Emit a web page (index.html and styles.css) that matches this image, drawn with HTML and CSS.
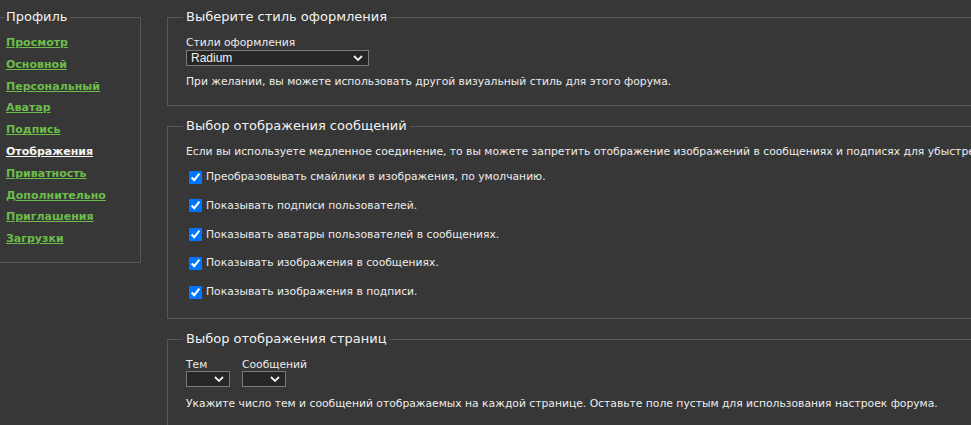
FILE: index.html
```html
<!DOCTYPE html>
<html lang="ru">
<head>
<meta charset="utf-8">
<title>Профиль — Отображения</title>
<link rel="stylesheet" href="styles.css">
</head>
<body>
<div class="page">
  <aside class="side">
    <fieldset class="nav-box">
      <legend class="nav-title">Профиль</legend>
      <nav class="nav">
        <a href="#" class="nav-link">Просмотр</a>
        <a href="#" class="nav-link">Основной</a>
        <a href="#" class="nav-link">Персональный</a>
        <a href="#" class="nav-link">Аватар</a>
        <a href="#" class="nav-link">Подпись</a>
        <a href="#" class="nav-link is-active">Отображения</a>
        <a href="#" class="nav-link">Приватность</a>
        <a href="#" class="nav-link">Дополнительно</a>
        <a href="#" class="nav-link">Приглашения</a>
        <a href="#" class="nav-link">Загрузки</a>
      </nav>
    </fieldset>
  </aside>
  <main class="main">
    <fieldset class="box box-style">
      <legend class="box-title">Выберите стиль оформления</legend>
      <div class="field-label">Стили оформления</div>
      <div class="select select-wide"><span class="select-value">Radium</span><svg class="chev" viewBox="0 0 10 6" width="10" height="6"><path d="M1 1l4 4 4-4" fill="none" stroke="#f0f0f0" stroke-width="1.8"/></svg></div>
      <p class="help">При желании, вы можете использовать другой визуальный стиль для этого форума.</p>
    </fieldset>

    <fieldset class="box box-msg">
      <legend class="box-title">Выбор отображения сообщений</legend>
      <p class="intro">Если вы используете медленное соединение, то вы можете запретить отображение изображений в сообщениях и подписях для убыстрения загрузки страниц.</p>
      <label class="check"><input type="checkbox" checked> Преобразовывать смайлики в изображения, по умолчанию.</label>
      <label class="check"><input type="checkbox" checked> Показывать подписи пользователей.</label>
      <label class="check"><input type="checkbox" checked> Показывать аватары пользователей в сообщениях.</label>
      <label class="check"><input type="checkbox" checked> Показывать изображения в сообщениях.</label>
      <label class="check"><input type="checkbox" checked> Показывать изображения в подписи.</label>
    </fieldset>

    <fieldset class="box box-pages">
      <legend class="box-title">Выбор отображения страниц</legend>
      <div class="pair">
        <div class="pair-item">
          <div class="field-label">Тем</div>
          <div class="select select-small"><span class="select-value"></span><svg class="chev" viewBox="0 0 10 6" width="10" height="6"><path d="M1 1l4 4 4-4" fill="none" stroke="#f0f0f0" stroke-width="1.8"/></svg></div>
        </div>
        <div class="pair-item">
          <div class="field-label">Сообщений</div>
          <div class="select select-small"><span class="select-value"></span><svg class="chev" viewBox="0 0 10 6" width="10" height="6"><path d="M1 1l4 4 4-4" fill="none" stroke="#f0f0f0" stroke-width="1.8"/></svg></div>
        </div>
      </div>
      <p class="help help-pages">Укажите число тем и сообщений отображаемых на каждой странице. Оставьте поле пустым для использования настроек форума.</p>
    </fieldset>
  </main>
</div>
</body>
</html>
```

FILE: styles.css
```css
html, body {
  margin: 0;
  padding: 0;
  background: #373737;
  overflow: hidden;
}
body {
  color: #ececec;
  font-family: "DejaVu Sans", Verdana, sans-serif;
  font-size: 10.75px;
  line-height: 14px;
}
.page {
  display: flex;
  align-items: flex-start;
  gap: 26px;
  width: 1400px;
  padding-top: 9px;
}
.side {
  flex: 0 0 141px;
}
.nav-box {
  margin: 0;
  border: 1px solid #575757;
  border-left: none;
  padding: 0 0 12px 4px;
  min-width: 0;
}
.nav-title, .box-title {
  font-size: 13px;
  line-height: 16px;
  padding: 0 2px;
  color: #f2f2f2;
}
.nav {
  margin-top: 7px;
  display: flex;
  flex-direction: column;
}
.nav-link {
  display: block;
  padding-left: 2px;
  font-size: 11px;
  line-height: 21.8px;
  font-weight: bold;
  color: #6cbd4a;
  text-decoration: underline;
}
.nav-link.is-active {
  color: #f4f4f4;
}
.main {
  flex: 0 0 1150px;
  display: flex;
  flex-direction: column;
  gap: 12px;
}
.box {
  margin: 0;
  border: 1px solid #575757;
  padding: 0 18px 16px 15px;
  min-width: 0;
}
.box-title {
  padding: 0 3px;
  margin-left: 0;
}
.field-label {
  margin-top: 11px;
  padding-left: 3px;
}
.select {
  position: relative;
  display: flex;
  align-items: center;
  box-sizing: border-box;
  height: 16px;
  margin-left: 3px;
  background: #262626;
  border: 1px solid #7a7a7a;
  color: #f2f2f2;
}
.select-wide { width: 183px; }
.select-small { width: 44px; margin-top: -1px; }
.select-value {
  padding-left: 4px;
  font-family: "Liberation Sans", Arial, sans-serif;
  font-size: 12px;
}
.chev {
  position: absolute;
  right: 5px;
  top: 4px;
}
.help {
  margin: 9px 0 0 3px;
}
.box-msg {
  padding-bottom: 18px;
}
.intro {
  margin: 11px 0 0 3px;
  white-space: nowrap;
}
.check {
  display: flex;
  align-items: center;
  height: 16px;
  margin-top: 12.75px;
  white-space: nowrap;
}
.check:first-of-type {
  margin-top: 10px;
}
.check input {
  width: 13px;
  height: 13px;
  margin: 0 4px 0 6px;
}
.pair {
  display: flex;
  gap: 9px;
}
.pair-item {
  display: flex;
  flex-direction: column;
}
.help-pages {
  margin-top: 10px;
}
```
